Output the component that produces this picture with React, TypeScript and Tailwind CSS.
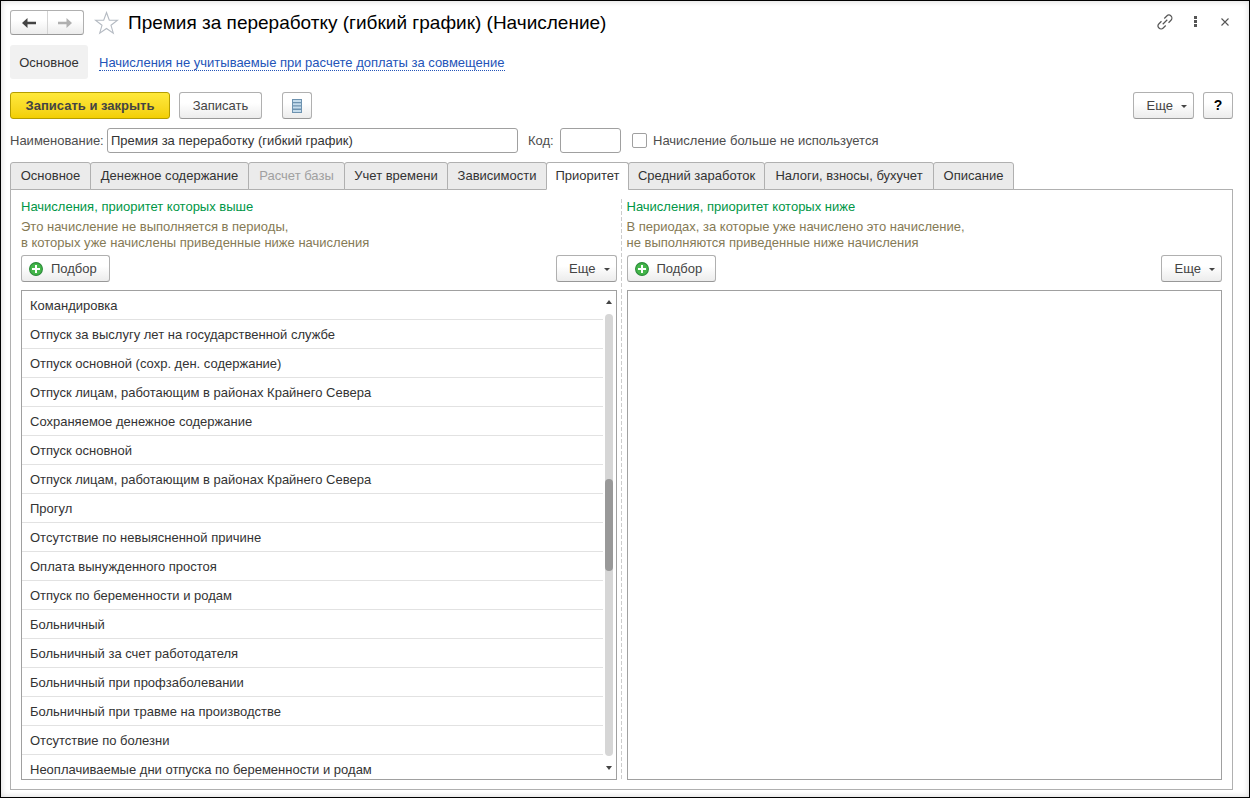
import { useState, type ReactNode } from "react";
import clsx from "clsx";

const tabs = [
  { title: "Основное", width: "w-[81px]" },
  { title: "Денежное содержание", width: "w-[159px]" },
  { title: "Расчет базы", width: "w-[97px]", disabled: true },
  { title: "Учет времени", width: "w-[104px]" },
  { title: "Зависимости", width: "w-[100px]" },
  { title: "Приоритет", width: "w-[83px]" },
  { title: "Средний заработок", width: "w-[137px]" },
  { title: "Налоги, взносы, бухучет", width: "w-[170px]" },
  { title: "Описание", width: "w-[81px]" },
];

const higherPriority = [
  "Командировка",
  "Отпуск за выслугу лет на государственной службе",
  "Отпуск основной (сохр. ден. содержание)",
  "Отпуск лицам, работающим в районах Крайнего Севера",
  "Сохраняемое денежное содержание",
  "Отпуск основной",
  "Отпуск лицам, работающим в районах Крайнего Севера",
  "Прогул",
  "Отсутствие по невыясненной причине",
  "Оплата вынужденного простоя",
  "Отпуск по беременности и родам",
  "Больничный",
  "Больничный за счет работодателя",
  "Больничный при профзаболевании",
  "Больничный при травме на производстве",
  "Отсутствие по болезни",
  "Неоплачиваемые дни отпуска по беременности и родам",
];

function Button({ className, label, children }: { className?: string; label?: string; children: ReactNode }) {
  return (
    <button
      type="button"
      aria-label={label}
      className={clsx(
        "flex h-[27px] shrink-0 items-center rounded-[3px] border border-[#b0b0b0] border-b-[#989898] bg-linear-to-b from-white from-40% to-[#ececec] text-[#444]",
        className
      )}
    >
      {children}
    </button>
  );
}

function MoreButton() {
  return (
    <Button className="w-[61px] justify-end gap-2 pr-[6px]">
      Еще
      <svg width="6" height="3" viewBox="0 0 6 3" fill="#444" className="mt-[2px]">
        <path d="M0 0h6L3 3z" />
      </svg>
    </Button>
  );
}

function AddButton() {
  return (
    <Button className="w-[89px] gap-2 pl-[7px]">
      <svg width="14" height="14" viewBox="0 0 14 14">
        <circle cx="7" cy="7" r="6.4" fill="#43b649" stroke="#2b8a3a" strokeWidth="1.1" />
        <path d="M7 3v8M3 7h8" stroke="#fff" strokeWidth="2" />
      </svg>
      Подбор
    </Button>
  );
}

function Scrollbar() {
  return (
    <div className="flex w-[13px] shrink-0 flex-col items-center pr-[1px] pt-[9px] pb-[9px]">
      <svg width="6" height="4" viewBox="0 0 6 4" fill="#444">
        <path d="M3 0l3 4H0z" />
      </svg>
      <div className="mt-[10px] mb-[10px] flex w-2 flex-1 flex-col rounded-full bg-[#d6d6d6]">
        <div className="grow-[165]" />
        <div className="h-[92px] rounded-full bg-[#999]" />
        <div className="grow-[185]" />
      </div>
      <svg width="6" height="4" viewBox="0 0 6 4" fill="#444">
        <path d="M0 0h6L3 4z" />
      </svg>
    </div>
  );
}

function PriorityList({ title, hint, items }: { title: string; hint: [string, string]; items: string[] }) {
  return (
    <section className="flex min-h-0 min-w-0 flex-1 flex-col">
      <h2 className="leading-4 text-[#009646]">{title}</h2>
      <p className="mt-1 leading-4 text-[#857a55]">
        {hint[0]}
        <br />
        {hint[1]}
      </p>
      <div className="mt-1 flex justify-between">
        <AddButton />
        <MoreButton />
      </div>
      <div className="mt-2 flex min-h-0 flex-1 border border-[#a0a0a0]">
        {items.length > 0 && (
          <>
            <ul className="min-w-0 flex-1 overflow-hidden">
              {items.map((item, i) => (
                <li key={i} className="h-[29px] truncate border-b border-[#e2e2e2] pl-2 leading-[30px] text-[#333]">
                  {item}
                </li>
              ))}
            </ul>
            <Scrollbar />
          </>
        )}
      </div>
    </section>
  );
}

export default function App() {
  const [active, setActive] = useState("Приоритет");
  const [name, setName] = useState("Премия за переработку (гибкий график)");

  return (
    <div className="flex h-screen flex-col border border-black bg-white pt-[9px] pr-4 pb-[7px] pl-[9px] font-['Liberation_Sans',Arial,sans-serif] text-[13px] text-[#333] shadow-[inset_0_0_6px_#d4d4d4]">
      <header className="flex h-[25px] shrink-0 items-center">
        <div className="flex h-[25px] w-[74px] rounded-[3px] border border-[#b0b0b0] border-b-[#989898] bg-linear-to-b from-white from-40% to-[#ececec]">
          <button type="button" aria-label="Назад" className="flex flex-1 items-center justify-center border-r border-[#d4d4d4]">
            <svg width="14" height="10" viewBox="0 0 14 10" fill="#444">
              <path d="M0 5L5.5 0v3.7H14v2.6H5.5V10z" />
            </svg>
          </button>
          <button type="button" aria-label="Вперед" className="flex flex-1 items-center justify-center">
            <svg width="14" height="10" viewBox="0 0 14 10" fill="#b0b0b0">
              <path d="M14 5L8.5 0v3.7H0v2.6h8.5V10z" />
            </svg>
          </button>
        </div>
        <button type="button" aria-label="В избранное" className="ml-[10px]">
          <svg width="25" height="24" viewBox="0 0 25 24" fill="none" stroke="#b4bac2" strokeWidth="1.1">
            <path d="M12.5 1.5l2.8 7.6 8.2.2-6.5 5 2.3 7.9-6.8-4.7-6.8 4.7 2.3-7.9-6.5-5 8.2-.2z" />
          </svg>
        </button>
        <h1 className="ml-[9px] flex-1 truncate text-[19px] leading-6 text-black">
          Премия за переработку (гибкий график) (Начисление)
        </h1>
        <div className="flex h-[23px] items-center self-start">
          <button type="button" aria-label="Получить ссылку">
            <svg width="16" height="16" viewBox="-8 -8 16 16" fill="none" stroke="#555" strokeWidth="1.2">
              <g transform="rotate(-45)">
                <path d="M-2 -3h-3.5a3 3 0 0 0 0 6h3.5M2 -3h3.5a3 3 0 0 1 0 6h-3.5M-3.2 0h6.4" />
              </g>
            </svg>
          </button>
          <button type="button" aria-label="Действия" className="ml-[21px]">
            <svg width="3" height="11" viewBox="0 0 3 11" fill="#555">
              <path d="M0 0h3v3H0zM0 4h3v3H0zM0 8h3v3H0z" />
            </svg>
          </button>
          <button type="button" aria-label="Закрыть" className="mr-1 ml-6">
            <svg width="8" height="8" viewBox="0 0 8 8" stroke="#555" strokeWidth="1.1">
              <path d="M.5.5l7 7M7.5.5l-7 7" />
            </svg>
          </button>
        </div>
      </header>

      <nav className="mt-[10px] flex h-[34px] shrink-0 items-center gap-[11px]">
        <span className="flex h-[34px] w-[78px] items-center justify-center rounded-[3px] bg-[#f1f1f1] pt-[2px]">Основное</span>
        <a href="#" className="mt-[2px] border-b border-dotted border-[#2354b8] leading-[14px] text-[#2354b8]">
          Начисления не учитываемые при расчете доплаты за совмещение
        </a>
      </nav>

      <div className="mt-[13px] flex shrink-0">
        <button
          type="button"
          className="h-[27px] w-40 rounded-[3px] border border-[#b59d00] bg-linear-to-b from-[#ffe93a] to-[#f3cf00] font-bold text-[#444]"
        >
          Записать и закрыть
        </button>
        <Button className="ml-[9px] w-[83px] justify-center">Записать</Button>
        <Button className="ml-5 w-[30px] justify-center" label="Реестр">
          <svg width="10" height="14" viewBox="0 0 10 14">
            <path d="M0 0h10v14H0z" fill="#6e93b0" />
            <path d="M1 2h8M1 5.3h8M1 8.6h8M1 12h8" stroke="#c5dcec" strokeWidth="2" />
          </svg>
        </Button>
        <div className="flex-1" />
        <MoreButton />
        <Button className="ml-[9px] w-[30px] justify-center text-[14px] font-bold text-black">?</Button>
      </div>

      <div className="mt-[9px] flex h-[25px] shrink-0 items-center text-[#4d4d4d]">
        <label htmlFor="name" className="w-[97px]">
          Наименование:
        </label>
        <input
          id="name"
          value={name}
          onChange={(e) => setName(e.target.value)}
          className="h-[25px] w-[411px] rounded-[3px] border border-[#a0a0a0] bg-white px-[3px] text-[#333] outline-none"
        />
        <label htmlFor="code" className="ml-[10px] w-8">
          Код:
        </label>
        <input id="code" className="h-[25px] w-[61px] rounded-[3px] border border-[#a0a0a0] bg-white px-[3px] outline-none" />
        <input
          id="unused"
          type="checkbox"
          className="ml-[11px] size-[15px] appearance-none rounded-[2px] border border-[#a0a0a0] bg-white checked:bg-[#777]"
        />
        <label htmlFor="unused" className="ml-[6px]">
          Начисление больше не используется
        </label>
      </div>

      <div role="tablist" className="z-10 mt-[9px] flex h-7 shrink-0">
        {tabs.map((tab) => (
          <button
            key={tab.title}
            type="button"
            role="tab"
            aria-selected={tab.title === active}
            disabled={tab.disabled}
            onClick={() => setActive(tab.title)}
            className={clsx(
              "-mr-px h-7 shrink-0 rounded-t-[3px] border border-[#b0b0b0] whitespace-nowrap",
              tab.width,
              tab.title === active ? "border-b-white bg-white" : "bg-[#ebebeb]",
              tab.disabled && "text-[#a0a0a0]"
            )}
          >
            {tab.title}
          </button>
        ))}
      </div>

      <main className="-mt-px flex min-h-0 flex-1 border border-[#b0b0b0] px-[10px] pt-[9px] pb-[9px]">
        <PriorityList
          title="Начисления, приоритет которых выше"
          hint={["Это начисление не выполняется в периоды,", "в которых уже начислены приведенные ниже начисления"]}
          items={higherPriority}
        />
        <div className="mr-[5px] ml-1 w-px shrink-0 bg-[repeating-linear-gradient(to_bottom,#ccc_0_4px,transparent_4px_6px)]" />
        <PriorityList
          title="Начисления, приоритет которых ниже"
          hint={["В периодах, за которые уже начислено это начисление,", "не выполняются приведенные ниже начисления"]}
          items={[]}
        />
      </main>
    </div>
  );
}
